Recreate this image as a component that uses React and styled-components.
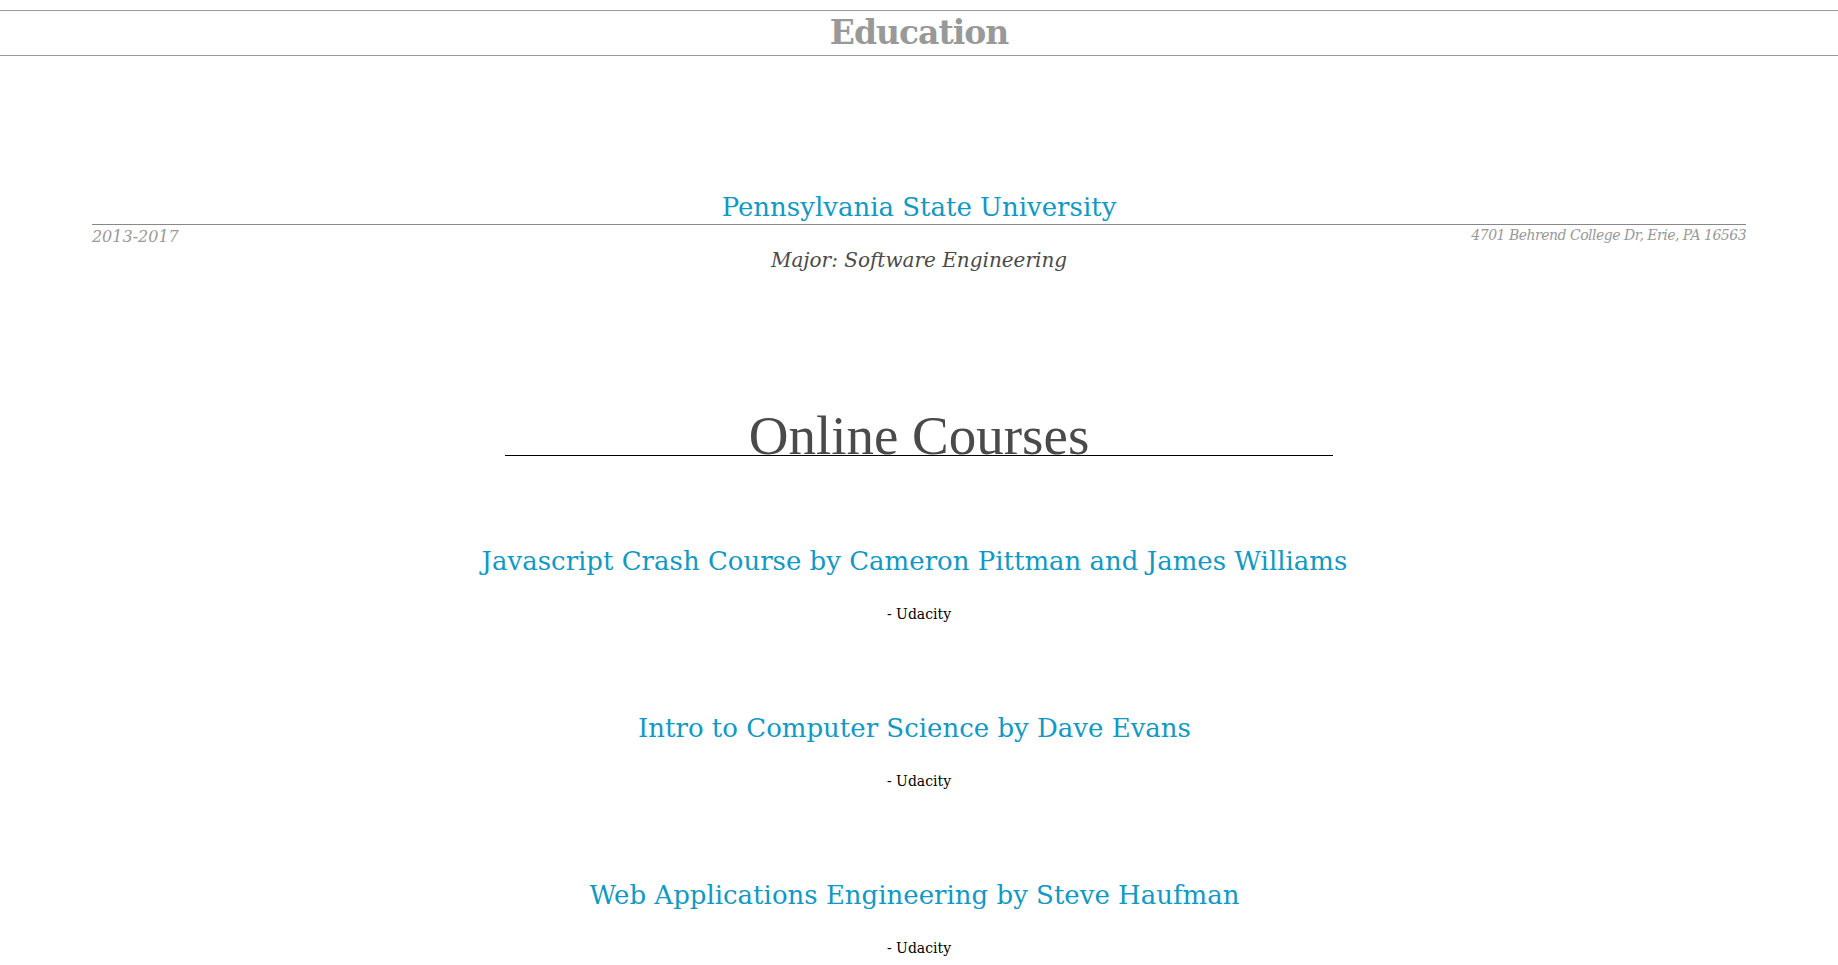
import React from "react";
import styled, { createGlobalStyle } from "styled-components";

const GlobalStyle = createGlobalStyle`
  html, body {
    margin: 0;
    padding: 0;
    background: #ffffff;
  }
  body {
    font-family: "DejaVu Serif", "Liberation Serif", serif;
    color: #000;
  }
`;

const Page = styled.div`
  width: 100%;
  padding-bottom: 40px;
`;

const SectionTitle = styled.h2`
  margin: 10px 0 0;
  padding: 0;
  border-top: 1px solid #9a9a9a;
  border-bottom: 1px solid #9a9a9a;
  text-align: center;
  color: #999999;
  font-weight: bold;
  font-size: 33px;
  letter-spacing: -1px;
  line-height: 44px;
`;

const Main = styled.main`
  width: 90%;
  margin: 0 auto;
`;

const EducationEntry = styled.section`
  margin-top: 134px;
`;

const SchoolName = styled.a`
  display: block;
  text-align: center;
  color: #1199c4;
  text-decoration: none;
  font-size: 26px;
  line-height: 34px;
  border-bottom: 1px solid #888888;
`;

const MetaGrid = styled.div`
  display: grid;
  grid-template-columns: 1fr auto 1fr;
  align-items: start;
`;

const DateText = styled.div`
  justify-self: start;
  padding-top: 2px;
  font-style: italic;
  color: #999999;
  font-size: 16px;
  line-height: 20px;
`;

const Major = styled.h3`
  margin: 0;
  padding-top: 23px;
  font-weight: normal;
  font-style: italic;
  color: #4a4a4a;
  font-size: 20px;
  line-height: 24px;
  text-align: center;
`;

const LocationText = styled.div`
  justify-self: end;
  padding-top: 2px;
  font-style: italic;
  color: #999999;
  font-size: 14px;
  letter-spacing: -0.5px;
  line-height: 16px;
`;

const CoursesHeading = styled.h2`
  width: 50%;
  margin: 144px auto 0;
  text-align: center;
  font-weight: normal;
  font-family: "Liberation Serif", "DejaVu Serif", serif;
  font-size: 55px;
  line-height: 39px;
  color: #4a4a4a;
  border-bottom: 1px solid #000000;
`;

const CourseList = styled.div`
  display: flex;
  flex-direction: column;
  gap: 87px;
  padding-top: 88px;
`;

const Course = styled.article`
  display: flex;
  flex-direction: column;
  align-items: center;
  gap: 26px;
`;

const CourseTitle = styled.a`
  color: #1199c4;
  text-decoration: none;
  font-size: 26px;
  line-height: 34px;
  padding-right: 9px;
`;

const CourseSchool = styled.div`
  color: #000000;
  font-size: 14px;
  line-height: 20px;
`;

const courses = [
  "Javascript Crash Course by Cameron Pittman and James Williams",
  "Intro to Computer Science by Dave Evans",
  "Web Applications Engineering by Steve Haufman",
];

export default function App() {
  return (
    <Page>
      <GlobalStyle />
      <SectionTitle>Education</SectionTitle>
      <Main>
        <EducationEntry>
          <SchoolName href="#">Pennsylvania State University</SchoolName>
          <MetaGrid>
            <DateText>2013-2017</DateText>
            <Major>Major: Software Engineering</Major>
            <LocationText>4701 Behrend College Dr, Erie, PA 16563</LocationText>
          </MetaGrid>
        </EducationEntry>
        <CoursesHeading>Online Courses</CoursesHeading>
        <CourseList>
          {courses.map((c) => (
            <Course key={c}>
              <CourseTitle href="#">{c}</CourseTitle>
              <CourseSchool>- Udacity</CourseSchool>
            </Course>
          ))}
        </CourseList>
      </Main>
    </Page>
  );
}
